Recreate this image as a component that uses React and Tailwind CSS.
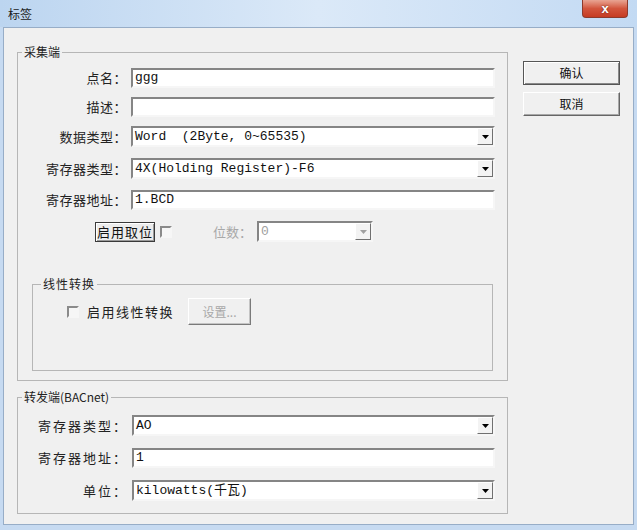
import React from 'react';

const cjk = { fontFamily: '"Noto Sans CJK SC", "Liberation Sans", sans-serif' };

function Arrow({ disabled }) {
  return (
    <svg width="7" height="4" viewBox="0 0 7 4">
      <path d="M0 0h7L3.5 4z" fill={disabled ? '#a0a0a0' : '#000'} />
    </svg>
  );
}

function Edit({ value, width = 'w-[364px]' }) {
  return (
    <div
      className={`${width} h-[20px] flex items-center pl-[2px] bg-white border-2 border-t-[#858585] border-l-[#858585] border-r-[#f6f6f6] border-b-[#f6f6f6] font-['Liberation_Mono','Noto_Sans_CJK_SC',monospace] text-[13px] text-[#111] whitespace-pre`}
    >
      {value}
    </div>
  );
}

function Combo({ value, width = 'w-[364px]', disabled }) {
  return (
    <div
      className={`${width} h-[21px] flex items-stretch bg-white border-2 border-t-[#858585] border-l-[#858585] border-r-[#f6f6f6] border-b-[#f6f6f6] font-['Liberation_Mono','Noto_Sans_CJK_SC',monospace] text-[13px] whitespace-pre`}
    >
      <span className={`flex-1 flex items-center pl-[2px] ${disabled ? 'text-[#a0a0a0]' : 'text-[#111]'}`}>{value}</span>
      <span className="w-[16px] flex items-center justify-center bg-[#f3f3f3] border border-t-white border-l-white border-r-[#707070] border-b-[#707070]">
        <Arrow disabled={disabled} />
      </span>
    </div>
  );
}

function Row({ label, children, labelWidth = 'w-[109px]', track = 'tracking-[0.5px]', className = '' }) {
  return (
    <div className={`flex items-center gap-[4px] ${className}`}>
      <span className={`${labelWidth} ${track} text-right text-[13px] text-[#222] whitespace-nowrap`}>{label}</span>
      {children}
    </div>
  );
}

function CheckBox() {
  return (
    <span className="block w-[12px] h-[12px] bg-[#f6f6f6] border-2 border-t-[#8a8a8a] border-l-[#8a8a8a] border-r-[#f6f6f6] border-b-[#f6f6f6]" />
  );
}

export default function App() {
  return (
    <div className="w-[637px] h-[530px] flex flex-col bg-[#c6daf1] overflow-hidden" style={cjk}>
      {/* title bar */}
      <div className="h-[27px] flex items-start justify-between bg-gradient-to-r from-[#bcd5f0] via-[#dbe9f8] to-[#c3daf3]">
        <span className="ml-[8px] mt-[5px] text-[12px] text-[#1b1b1b]">标签</span>
        <div className="mr-[9px] w-[46px] h-[18px] rounded-b-[4px] border border-t-0 border-[#8d3a2c] bg-gradient-to-b from-[#e8a493] via-[#d2553d] to-[#c63b22] flex items-center justify-center">
          <span className="text-[13px] font-bold text-white leading-none [text-shadow:0_0_2px_#5a1a10] font-['Liberation_Sans',sans-serif]">x</span>
        </div>
      </div>

      {/* client area */}
      <div className="mx-[3px] mb-[5px] flex-1 flex bg-[#f0f0f0] border border-[#97adc7]">
        <div className="ml-[13px] mt-[16px] w-[491px] flex flex-col">
          {/* 采集端 */}
          <fieldset className="border border-[#b6b6b6] pb-[9px]">
            <legend className="ml-[4px] px-[2px] text-[12px] leading-[16px] text-[#222]">采集端</legend>
            <Row label="点名：" className="mt-[8px]">
              <Edit value="ggg" />
            </Row>
            <Row label="描述：" className="mt-[9px]">
              <Edit value="" />
            </Row>
            <Row label="数据类型：" className="mt-[9px]">
              <Combo value="Word  (2Byte, 0~65535)" />
            </Row>
            <Row label="寄存器类型：" className="mt-[11px]">
              <Combo value="4X(Holding Register)-F6" />
            </Row>
            <Row label="寄存器地址：" className="mt-[11px]">
              <Edit value="1.BCD" />
            </Row>
            <div className="mt-[11px] flex items-center">
              <span className="ml-[77px] w-[60px] h-[20px] flex items-center justify-center border border-[#3a3a3a] bg-[#ececec] text-[13px] tracking-[1px] text-[#111] shadow-[inset_1px_1px_0_#fff,inset_-1px_-1px_0_#9a9a9a]">
                启用取位
              </span>
              <span className="ml-[5px]">
                <CheckBox />
              </span>
              <span className="ml-[41px] text-[13px] text-[#a8a8a8]">位数：</span>
              <span className="ml-[5px]">
                <Combo value="0" width="w-[116px]" disabled />
              </span>
            </div>

            {/* 线性转换 */}
            <fieldset className="mt-[34px] ml-[14px] mr-[14px] border border-[#b6b6b6] pb-[45px]">
              <legend className="ml-[8px] px-[2px] text-[12px] leading-[16px] tracking-[1px] text-[#222]">线性转换</legend>
              <div className="mt-[6px] flex items-center">
                <span className="ml-[34px] flex">
                  <CheckBox />
                </span>
                <span className="ml-[8px] text-[13px] tracking-[1.5px] text-[#222]">启用线性转换</span>
                <span className="ml-[14px] w-[63px] h-[27px] flex items-center justify-center bg-[#f0f0f0] border border-t-white border-l-white border-r-[#7a7a7a] border-b-[#7a7a7a] shadow-[inset_-1px_-1px_0_#c4c4c4] text-[12px] text-[#a8a8a8]">
                  设置...
                </span>
              </div>
            </fieldset>
          </fieldset>

          {/* 转发端 */}
          <fieldset className="mt-[8px] border border-[#b6b6b6] pb-[12px]">
            <legend className="ml-[4px] px-[2px] text-[12px] leading-[16px] text-[#222]">转发端(BACnet)</legend>
            <Row label="寄存器类型：" labelWidth="w-[110px]" track="tracking-[2px]" className="mt-[10px]">
              <Combo value="AO" width="w-[363px]" />
            </Row>
            <Row label="寄存器地址：" labelWidth="w-[110px]" track="tracking-[2px]" className="mt-[12px]">
              <Edit value="1" width="w-[363px]" />
            </Row>
            <Row label="单位：" labelWidth="w-[110px]" track="tracking-[2px]" className="mt-[12px]">
              <Combo value="kilowatts(千瓦)" width="w-[363px]" />
            </Row>
          </fieldset>
        </div>

        {/* buttons */}
        <div className="ml-[15px] mt-[33px] flex flex-col gap-[7px]">
          <button className="w-[97px] h-[24px] flex items-center justify-center bg-[#f0f0f0] border border-[#555] shadow-[inset_1px_1px_0_#fff,inset_-1px_-1px_0_#8a8a8a] text-[12px] text-[#111]">
            确认
          </button>
          <button className="w-[97px] h-[24px] flex items-center justify-center bg-[#f0f0f0] border border-t-white border-l-white border-r-[#666] border-b-[#666] shadow-[inset_-1px_-1px_0_#a8a8a8] text-[12px] text-[#111]">
            取消
          </button>
        </div>
      </div>
    </div>
  );
}
